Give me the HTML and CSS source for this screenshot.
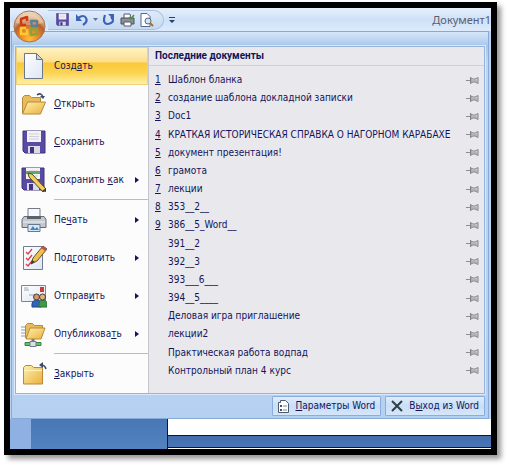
FILE: index.html
```
<!DOCTYPE html>
<html lang="ru">
  <head>
    <meta charset="UTF-8" />
    <meta name="viewport" content="width=device-width, initial-scale=1.0" />
    <title>Документ1</title>
    <link rel="stylesheet" href="styles.css">
  </head>
  <body>
    <svg class="defs" width="0" height="0" aria-hidden="true">
      <defs>
        <linearGradient id="folder" x1="0" y1="0" x2="1" y2="1">
          <stop offset="0" stop-color="#fff0ac" />
          <stop offset="1" stop-color="#e9b13c" />
        </linearGradient>
        <linearGradient id="paper" x1="0" y1="0" x2="1" y2="1">
          <stop offset="0" stop-color="#ffffff" />
          <stop offset="1" stop-color="#dce6f4" />
        </linearGradient>
        <radialGradient id="orb" cx="0.5" cy="0.9" r="0.9">
          <stop offset="0" stop-color="#ffc03a" />
          <stop offset="0.35" stop-color="#e8822a" />
          <stop offset="0.6" stop-color="#b8602f" />
          <stop offset="0.75" stop-color="#dba777" />
          <stop offset="1" stop-color="#f3e3d2" />
        </radialGradient>
        <symbol id="floppy" viewBox="0 0 24 24">
          <path d="M1 1h22v22H3l-2-2z" fill="#5a4aa4" stroke="#41337f" />
          <path d="M5 1h14v11H5z" fill="#f3f3f6" />
          <path d="M7 4h10M7 6.500h10M7 9h10" stroke="#cfd0da" />
          <path d="M6 16h12v7H6z" fill="#d9dbe6" />
          <path d="M8 17h4v6H8z" fill="#41337f" />
        </symbol>
        <symbol id="pin" viewBox="0 0 13 9">
          <path d="M0 4.500h4" stroke="#8b8b90" />
          <path d="M4.500 1v7M5 2l2 1h2l3-1.500v6L9 6H7L5 7z" fill="#cfcfd4" stroke="#85858b" />
          <path d="M6 5h5" stroke="#9a9aa0" />
        </symbol>
      </defs>
    </svg>

    <main class="window">
      <header class="titlebar">
        <button class="office-button" type="button" aria-label="Office">
          <svg width="33" height="33" viewBox="0 0 33 33">
            <circle cx="16.500" cy="16.500" r="15.500" fill="url(#orb)" stroke="#a07558" />
            <path d="M3 13a14 12 0 0 1 27 0q-13 4-27 0z" fill="#fff" opacity="0.3" />
            <g fill="none" stroke-width="2.500" stroke-linejoin="round">
              <path d="M13 15H8V9l6-2v4" stroke="#cf3a14" />
              <path d="M18 11h6v5h-5z" stroke="#5c8298" />
              <path d="M13 18H8v6h6v-5" stroke="#ffcb2c" />
              <path d="M18 19h6v5l-6 1z" stroke="#8ca436" />
            </g>
          </svg>
        </button>
        <div class="quick-access">
          <button type="button" aria-label="Сохранить"><svg width="13" height="13"><use href="#floppy" /></svg></button>
          <button type="button" aria-label="Отменить">
            <svg width="13" height="13" viewBox="0 0 13 13">
              <path d="M3 5q6-4 8 0t-3 7" fill="none" stroke="#3d63b8" stroke-width="2.200" />
              <path d="M1 1v7h6z" fill="#3d63b8" />
            </svg>
          </button>
          <button class="narrow" type="button" aria-label="Список отмены">
            <svg width="5" height="3"><path d="M0 0h5L2.500 3z" fill="#59749f" /></svg>
          </button>
          <button type="button" aria-label="Повторить">
            <svg width="13" height="13" viewBox="0 0 13 13">
              <path d="M3 2q-2 6 0 8t6 0 0-6" fill="none" stroke="#3d63b8" stroke-width="2.200" />
              <path d="M6 1h6v6z" fill="#3d63b8" />
            </svg>
          </button>
          <button type="button" aria-label="Быстрая печать">
            <svg width="15" height="14" viewBox="0 0 15 14">
              <path d="M4 5V1h6l1 4" fill="#fff" stroke="#555c68" />
              <path d="M1 5h13v6H1z" fill="#8a8f99" stroke="#4a505c" />
              <path d="M4 9h7v4H4z" fill="#fff" stroke="#555c68" />
              <path d="M9 4l2 2 3-4" fill="none" stroke="#3f9a3c" stroke-width="1.500" />
            </svg>
          </button>
          <button type="button" aria-label="Предварительный просмотр">
            <svg width="14" height="14" viewBox="0 0 14 14">
              <path d="M1 .5h6l3 3v10H1z" fill="#fff" stroke="#59678a" />
              <circle cx="8" cy="8" r="3" fill="#cfe6f8" stroke="#596579" />
              <path d="M10 10l3 3" stroke="#a2722e" stroke-width="2" />
            </svg>
          </button>
        </div>
        <button class="customize" type="button" aria-label="Настройка панели">
          <svg width="6" height="6"><path d="M0 0h6v1H0zM0 3h6L3 6z" fill="#27416e" /></svg>
        </button>
        <span class="doc-title">Документ1</span>
      </header>

      <section class="menu">
        <div class="panel">
          <nav class="commands">
            <button class="command active" type="button">
              <svg width="24" height="28" viewBox="0 0 24 28">
                <path d="M2.500 1.500h12l6 6v19h-18z" fill="url(#paper)" stroke="#6f7687" />
                <path d="M14.500 1.500v6h6z" fill="#c5d0e2" stroke="#6f7687" />
              </svg>
              <span>Созд<u>а</u>ть</span>
            </button>
            <button class="command" type="button">
              <svg width="26" height="24" viewBox="0 0 26 24">
                <path d="M1.500 21V5.500l2-2h5l2 2h9V10" fill="#e8bc5c" stroke="#b88a38" />
                <path d="M1.500 22l5-12h18l-5 12z" fill="url(#folder)" stroke="#b88a38" />
                <path d="M16 3q4-3 6 2" fill="none" stroke="#3c4a66" stroke-width="1.500" />
                <path d="M19 4h5l-2 3z" fill="#3c4a66" />
              </svg>
              <span><u>О</u>ткрыть</span>
            </button>
            <button class="command" type="button">
              <svg width="24" height="24"><use href="#floppy" /></svg>
              <span><u>С</u>охранить</span>
            </button>
            <button class="command" type="button">
              <svg width="26" height="26" viewBox="0 0 26 26">
                <use href="#floppy" width="24" height="24" />
                <path d="M5 4h14v3H5z" fill="#62a86a" />
                <path d="M7 6l4 1 14 15-3 3L8 10z" fill="#f2cf5a" stroke="#54451f" />
                <path d="M21 24l4-3v4z" fill="#463826" />
              </svg>
              <span>Сохранить <u>к</u>ак</span>
              <i class="arrow"></i>
            </button>
            <hr>
            <button class="command" type="button">
              <svg width="26" height="26" viewBox="0 0 26 26">
                <path d="M7 11V1.500h12V11" fill="#f5f8fc" stroke="#737985" />
                <path d="M3 9.500h20l2 3v8H1v-8z" fill="#c4c8cf" stroke="#646a76" />
                <path d="M6 9h14v3H6z" fill="#5b606b" />
                <path d="M2 15h22" stroke="#eef0f3" />
                <path d="M7 17.500h12v7H7z" fill="#d4e9fa" stroke="#6b7688" />
                <path d="M9 23l3-4 2 3 2-2 2 3z" fill="#3c87bd" />
              </svg>
              <span>Пе<u>ч</u>ать</span>
              <i class="arrow"></i>
            </button>
            <button class="command" type="button">
              <svg width="26" height="26" viewBox="0 0 26 26">
                <path d="M2.500 1.500h19v23h-19z" fill="url(#paper)" stroke="#737b94" />
                <path d="M5 7l2 2 4-5M5 13l2 2 4-5M5 19l2 2 4-5" fill="none" stroke="#d5414a" stroke-width="1.300" />
                <path d="M10 19l2-6L22 1l4 3-10 12z" fill="#f0c04e" stroke="#665029" />
                <path d="M22 1l4 3-2 2-4-3z" fill="#c05256" />
                <path d="M10 19l1-4 3 2z" fill="#41392f" />
              </svg>
              <span>Под<u>г</u>отовить</span>
              <i class="arrow"></i>
            </button>
            <button class="command" type="button">
              <svg width="26" height="24" viewBox="0 0 26 24">
                <path d="M.5 1.500h24v16H.5z" fill="url(#paper)" stroke="#7c8498" />
                <path d="M19 3h4v5h-4z" fill="#cf3c38" />
                <path d="M3 4h4M3 6h5M8 11h6" stroke="#9aa4b8" />
                <path d="M11 23q-1-7 5-7t4 7z" fill="#2f62c1" stroke="#214583" />
                <path d="M18 23q-1-7 4-7t4 7z" fill="#409a44" stroke="#286d36" />
                <circle cx="15.500" cy="13" r="3" fill="#cf9968" stroke="#493c38" />
                <circle cx="21.500" cy="13" r="3" fill="#e2b181" stroke="#493c38" />
              </svg>
              <span>Отправ<u>и</u>ть</span>
              <i class="arrow"></i>
            </button>
            <button class="command" type="button">
              <svg width="26" height="26" viewBox="0 0 26 26">
                <path d="M0 6h4M0 9h4M0 12h4M0 15h4" stroke="#929aa8" />
                <path d="M4.500 17V4.500l2-2h5l2 2h8V8" fill="#e8bc5c" stroke="#b88a38" />
                <path d="M5 18l4-11h15l-4 11z" fill="url(#folder)" stroke="#b88a38" />
                <path d="M12 18v4" stroke="#6f7d86" stroke-width="3" />
                <path d="M4 21.500h16v3H4z" fill="#67bd69" stroke="#3d8343" />
                <path d="M9 20.500h6v5H9z" fill="#d5e2e6" stroke="#6f7d86" />
              </svg>
              <span>Опубликова<u>т</u>ь</span>
              <i class="arrow"></i>
            </button>
            <hr>
            <button class="command" type="button">
              <svg width="26" height="24" viewBox="0 0 26 24">
                <path d="M2.500 22V5.500l2-2h6l2 2h9V22z" fill="url(#folder)" stroke="#b88a38" />
                <path d="M3 8.500h18" stroke="#fff3be" />
                <path d="M20 3q4 0 5 4" fill="none" stroke="#3c4a66" stroke-width="1.500" />
                <path d="M18 3l4-3v6z" fill="#3c4a66" />
              </svg>
              <span><u>З</u>акрыть</span>
            </button>
          </nav>

          <section class="recent">
            <h1>Последние документы</h1>
            <ul>
              <li><u>1</u><a href="#">Шаблон бланка</a><svg class="pin"><use href="#pin" /></svg></li>
              <li><u>2</u><a href="#">создание шаблона докладной записки</a><svg class="pin"><use href="#pin" /></svg></li>
              <li><u>3</u><a href="#">Doc1</a><svg class="pin"><use href="#pin" /></svg></li>
              <li><u>4</u><a href="#">КРАТКАЯ ИСТОРИЧЕСКАЯ СПРАВКА О НАГОРНОМ КАРАБАХЕ</a><svg class="pin"><use href="#pin" /></svg></li>
              <li><u>5</u><a href="#">документ презентация!</a><svg class="pin"><use href="#pin" /></svg></li>
              <li><u>6</u><a href="#">грамота</a><svg class="pin"><use href="#pin" /></svg></li>
              <li><u>7</u><a href="#">лекции</a><svg class="pin"><use href="#pin" /></svg></li>
              <li><u>8</u><a href="#">353__2__</a><svg class="pin"><use href="#pin" /></svg></li>
              <li><u>9</u><a href="#">386__5_Word__</a><svg class="pin"><use href="#pin" /></svg></li>
              <li><u></u><a href="#">391__2</a><svg class="pin"><use href="#pin" /></svg></li>
              <li><u></u><a href="#">392__3</a><svg class="pin"><use href="#pin" /></svg></li>
              <li><u></u><a href="#">393___6___</a><svg class="pin"><use href="#pin" /></svg></li>
              <li><u></u><a href="#">394__5____</a><svg class="pin"><use href="#pin" /></svg></li>
              <li><u></u><a href="#">Деловая игра приглашение</a><svg class="pin"><use href="#pin" /></svg></li>
              <li><u></u><a href="#">лекции2</a><svg class="pin"><use href="#pin" /></svg></li>
              <li><u></u><a href="#">Практическая работа водпад</a><svg class="pin"><use href="#pin" /></svg></li>
              <li><u></u><a href="#">Контрольный план 4 курс</a><svg class="pin"><use href="#pin" /></svg></li>
            </ul>
          </section>
        </div>

        <footer class="actions">
          <button type="button">
            <svg width="11" height="13" viewBox="0 0 11 13">
              <path d="M.5 2.500h2v-2h5l3 3v9H.5z" fill="#fff" stroke="#4b5a70" />
              <path d="M2 5h2v2H2zM2 9h2v2H2z" fill="#3f5068" />
              <path d="M5 6h4M5 10h4" stroke="#7b8799" />
            </svg>
            <span><u>П</u>араметры Word</span>
          </button>
          <button type="button">
            <svg width="12" height="12" viewBox="0 0 12 12">
              <path d="M1 1l10 10M11 1L1 11" stroke="#2f3e44" stroke-width="2" />
            </svg>
            <span>В<u>ы</u>ход из Word</span>
          </button>
        </footer>
      </section>

      <div class="workspace">
        <div class="ruler"></div>
        <div class="desk"></div>
        <div class="pages">
          <div class="page"></div>
          <div class="next-page"></div>
        </div>
      </div>
    </main>
  </body>
</html>
```
FILE: styles.css
```
* {
  box-sizing: border-box;
}
body {
  margin: 0;
  background: #fff;
  font-family: "DejaVu Sans Condensed", "Noto Sans", sans-serif;
  font-size: 10px;
  line-height: 16px;
  color: #14145a;
}
button {
  margin: 0;
  padding: 0;
  border: 0;
  background: none;
  font: inherit;
  color: inherit;
}
svg {
  display: block;
  flex: none;
}
.defs {
  position: absolute;
}
.window {
  margin: 2px 12px 10px 4px;
  border: 6px solid #000;
  box-shadow: 4px 4px 5px #999;
  background: #bcd4f0;
}

/* title bar */
.titlebar {
  position: relative;
  display: flex;
  align-items: center;
  height: 23px;
  padding-left: 38px;
  background: linear-gradient(#e6f0fc, #cfe1f7 50%, #dcebfb);
}
.office-button {
  position: absolute;
  left: 3px;
  top: 2px;
  z-index: 1;
}
.quick-access {
  display: flex;
  align-items: center;
  height: 20px;
  padding: 0 7px 0 5px;
  border: 1px solid #a9c0e2;
  border-left: 0;
  border-radius: 0 10px 10px 0;
  background: linear-gradient(#dfebfa, #c5d9f2);
}
.quick-access button {
  display: flex;
  justify-content: center;
  width: 19px;
}
.quick-access .narrow {
  width: 8px;
}
.customize {
  margin-left: 5px;
}
.doc-title {
  margin-left: auto;
  font-family: "Noto Sans", sans-serif;
  font-size: 11px;
  color: #58606f;
}

/* office menu */
.menu {
  margin: 0 2px 0 1px;
  padding: 0 3px;
  border: 1px solid #86a9d6;
  background: linear-gradient(#d7e6f8, #a9c7ea 14px, #bed6f3 30px, #b5d0f0);
}
.panel {
  display: flex;
  margin-top: 14px;
  border: 1px solid #93b4dc;
  outline: 1px solid #d9e8fa;
}
.commands {
  flex: none;
  width: 133px;
  border-right: 1px solid #c3c6cc;
  background: #fcfcfd;
}
.command {
  display: grid;
  grid-template-columns: 26px 1fr 8px;
  align-items: center;
  column-gap: 7px;
  width: 100%;
  height: 38px;
  padding: 0 5px;
  text-align: left;
}
.command svg {
  justify-self: center;
}
.command span {
  white-space: nowrap;
}
.command.active {
  border: 1px solid #efd17a;
  padding: 0 4px;
  background: linear-gradient(#fff3c4, #fbdf8c 38%, #fac938 42%, #fbd453 70%, #fff0a8);
}
.arrow {
  border: 3px solid transparent;
  border-left: 4px solid #14145a;
  border-right: 0;
  width: 4px;
}
.commands hr {
  margin: 0 0 1px 38px;
  border: 0;
  border-top: 1px solid #b9bcc2;
}
.recent {
  display: flex;
  flex: 1;
  flex-direction: column;
  min-width: 0;
  background: #e9e9ed;
}
.recent h1 {
  margin: 0;
  padding: 1px 6px;
  border-bottom: 1px solid #cfd2da;
  font-family: Roboto, sans-serif;
  font-size: 10px;
  font-weight: bold;
}
.recent ul {
  display: flex;
  flex: 1;
  flex-direction: column;
  margin: 0;
  padding: 5px 5px 13px 6px;
  list-style: none;
}
.recent li {
  display: flex;
  flex: 1;
  align-items: center;
}
.recent li u {
  flex: none;
  width: 13px;
}
.recent a {
  flex: 1;
  color: inherit;
  text-decoration: none;
  white-space: nowrap;
}
.pin {
  width: 13px;
  height: 9px;
}
.actions {
  display: flex;
  justify-content: flex-end;
  gap: 4px;
  padding: 2px 0;
}
.actions button {
  display: flex;
  align-items: center;
  gap: 6px;
  height: 20px;
  padding: 0 5px;
  border: 1px solid #8aaedb;
  border-radius: 1px;
  background: linear-gradient(#dfecfb, #c9def7 50%, #d5e6fa);
}

/* document area below the menu */
.workspace {
  display: flex;
  height: 30px;
}
.ruler {
  width: 21px;
  background: #8fb0e2;
}
.desk {
  width: 136px;
  background: linear-gradient(#4877b5, #5282c0);
}
.pages {
  display: flex;
  flex: 1;
  flex-direction: column;
  justify-content: space-between;
  border-left: 1px solid #101828;
  background: linear-gradient(#3c619c, #4a78b8);
}
.page {
  height: 17px;
  border-bottom: 1px solid #101828;
  background: #fff;
}
.next-page {
  height: 2px;
  border-top: 1px solid #101828;
  background: #fff;
}
```
